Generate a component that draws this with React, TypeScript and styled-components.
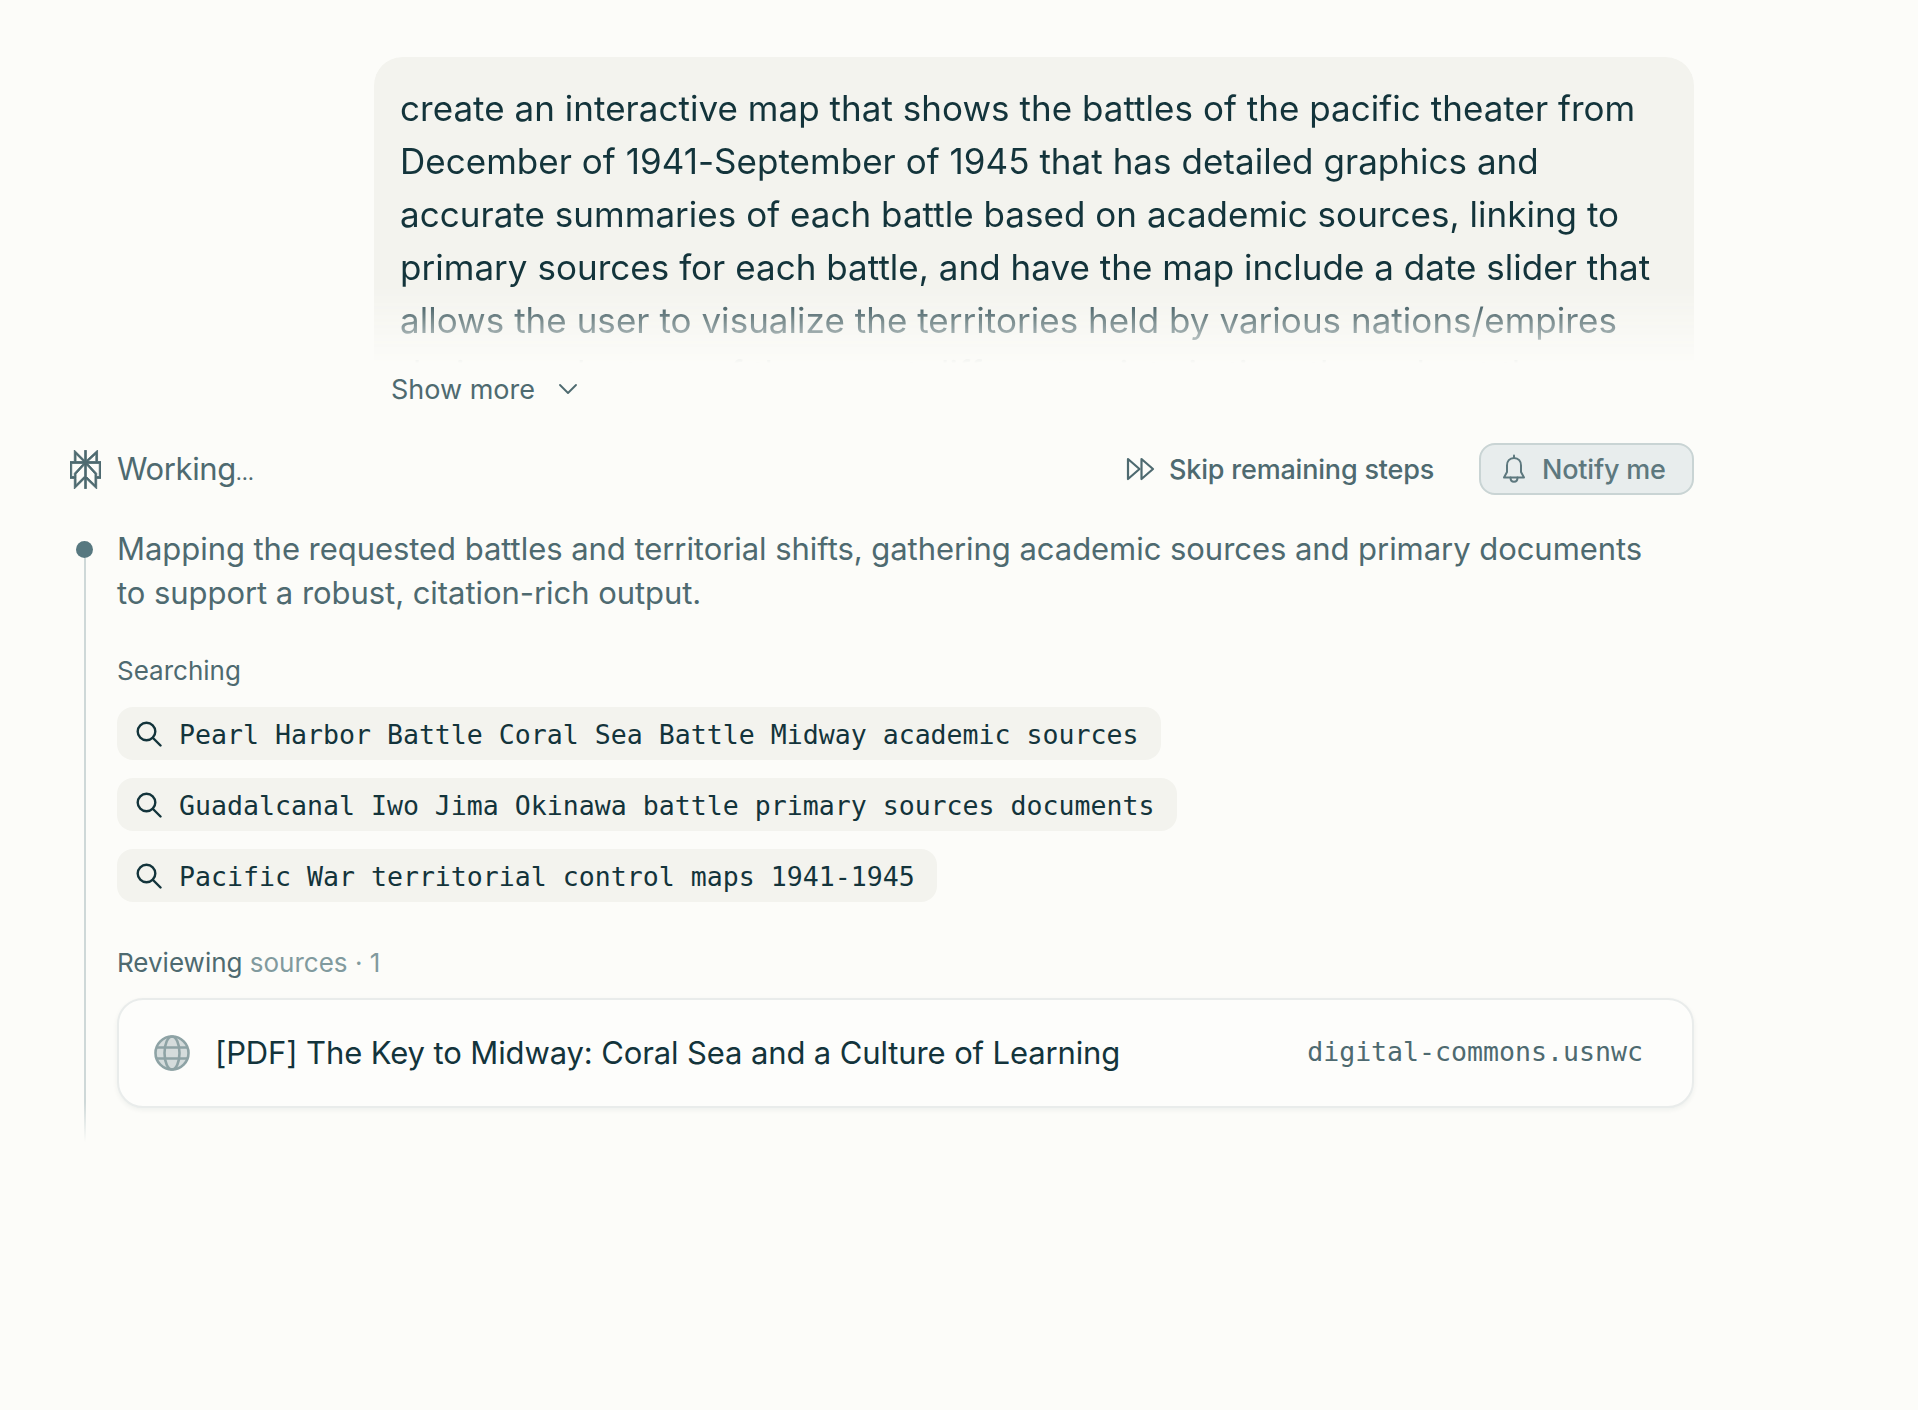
import React from "react";
import styled, { createGlobalStyle } from "styled-components";
import { ChevronDown } from "lucide-react";

const Global = createGlobalStyle`
  html, body { margin: 0; padding: 0; background: #fcfcf9; }
  body { font-family: Inter, "Liberation Sans", Arial, sans-serif; color: #13343b; }
`;

const Page = styled.div`
  box-sizing: border-box;
  width: 1918px;
  height: 1410px;
  padding: 57px 224px 0 70px;
  background: #fcfcf9;
`;

const Query = styled.div`
  margin-left: 304px;
`;

const Bubble = styled.div`
  box-sizing: border-box;
  height: 308px;
  padding: 25px 26px 0;
  overflow: hidden;
  border-radius: 28px 28px 0 0;
  background: #f3f3ee;
  font-size: 35px;
  line-height: 53px;
  letter-spacing: 0.03px;
  color: #13343b;
  -webkit-mask-image: linear-gradient(to bottom, #000 230px, transparent 306px);
  mask-image: linear-gradient(to bottom, #000 230px, transparent 306px);
`;

const ShowMore = styled.div`
  display: flex;
  align-items: center;
  gap: 17px;
  margin: 8px 0 0 17px;
  height: 32px;
  font-size: 27px;
  color: #4e6a70;
`;

const StatusRow = styled.div`
  display: flex;
  align-items: center;
  height: 52px;
  margin-top: 38px;
`;

const Working = styled.div`
  display: flex;
  align-items: center;
  gap: 16px;
  flex: 1;
  font-size: 31px;
  letter-spacing: -0.4px;
  color: #4e6a70;
`;

const WorkingLabel = styled.span`
  padding-bottom: 2px;
`;

const Dots = styled.span`
  font-size: 21px;
  letter-spacing: 0;
`;

const SkipButton = styled.div`
  display: flex;
  align-items: center;
  gap: 14px;
  margin-right: 45px;
  font-size: 27px;
  font-weight: 500;
  letter-spacing: -0.2px;
  color: #4e6a70;
`;

const NotifyButton = styled.div`
  box-sizing: border-box;
  display: flex;
  align-items: center;
  gap: 16px;
  width: 215px;
  height: 52px;
  padding-left: 21px;
  border: 2px solid #c9d4d4;
  border-radius: 16px;
  background: #e8eded;
  font-size: 27px;
  font-weight: 500;
  letter-spacing: -0.2px;
  color: #5d787e;
`;

const Step = styled.div`
  display: flex;
  gap: 18px;
  margin-top: 32px;
`;

const Rail = styled.div`
  display: flex;
  flex-direction: column;
  align-items: center;
  flex: 0 0 29px;
  padding-top: 14px;
`;

const Dot = styled.div`
  flex: none;
  width: 17px;
  height: 17px;
  border-radius: 50%;
  background: #577880;
`;

const RailLine = styled.div`
  flex: 1;
  width: 2px;
  background: linear-gradient(to bottom, #ced8d8 calc(100% - 40px), transparent);
`;

const StepBody = styled.div`
  flex: 1;
  min-width: 0;
  padding-bottom: 34px;
`;

const Summary = styled.div`
  font-size: 31px;
  line-height: 44px;
  letter-spacing: -0.05px;
  color: #4e6a70;
  padding-right: 40px;
`;

const SectionLabel = styled.div`
  font-size: 26px;
  line-height: 40px;
  color: #4e6a70;
  margin-top: ${(p: { $top: number }) => p.$top}px;
`;

const Muted = styled.span`
  color: #819a9e;
`;

const Chips = styled.div`
  display: flex;
  flex-direction: column;
  align-items: flex-start;
  gap: 18px;
  margin-top: 16px;
`;

const Chip = styled.div`
  box-sizing: border-box;
  display: flex;
  align-items: center;
  gap: 17px;
  height: 53px;
  padding: 0 22px 0 19px;
  border-radius: 16px;
  background: #f3f3ee;
  font-family: "DejaVu Sans Mono", monospace;
  font-size: 26.57px;
  color: #13343b;
`;

const ChipText = styled.span`
  padding-top: 2px;
`;

const SourceCard = styled.div`
  box-sizing: border-box;
  display: flex;
  align-items: center;
  height: 110px;
  margin-top: 15px;
  padding: 0 49px 0 35px;
  border: 2px solid #e9eceb;
  border-radius: 26px;
  background: #fdfdfb;
  box-shadow: 0 2px 5px rgba(19, 52, 59, 0.06);
`;

const SourceTitle = styled.div`
  flex: 1;
  margin-left: 25px;
  padding-bottom: 2px;
  font-size: 31px;
  letter-spacing: -0.12px;
  color: #13343b;
`;

const SourceDomain = styled.div`
  font-family: "DejaVu Sans Mono", monospace;
  font-size: 26.57px;
  color: #4e6a70;
  padding-bottom: 3px;
`;

const Logo = () => (
  <svg width="31" height="39" viewBox="1.6 0 20.8 24" preserveAspectRatio="none" fill="#4e6a70" stroke="#4e6a70" strokeWidth="0.55" strokeLinejoin="round">
    <path d="M22.3977 7.0896h-2.3106V.0676l-7.5094 6.3542V.1577h-1.1554v6.1966L4.4904 0v7.0896H1.6023v10.3976h2.8882V24l6.932-6.3591v6.2005h1.1554v-6.0469l6.9318 6.1807v-6.4879h2.8882V7.0896zm-3.4657-4.531v4.531h-5.355l5.355-4.531zm-13.2862.0676 4.8691 4.4634H5.6458V2.6262zM2.7576 16.332V8.245h7.8476l-6.1149 6.1147v1.9723H2.7576zm2.8882 5.0404v-3.8852h.0001v-2.6488l5.7763-5.7764v7.0111l-5.7764 5.2993zm12.7086.0248-5.7766-5.1509V9.0618l5.7766 5.7766v6.5588zm2.8882-5.0652h-1.733v-1.9723L13.3948 8.245h7.8478v8.087z" />
  </svg>
);

const SkipIcon = () => (
  <svg width="29" height="24" viewBox="0 0 29 24" fill="none" stroke="#4e6a70" strokeWidth="2.2" strokeLinejoin="round">
    <path d="M2 2L13.5 12L2 22Z" />
    <path d="M15.5 2L27 12L15.5 22Z" />
  </svg>
);

const BellIcon = () => (
  <svg width="24" height="30" viewBox="0 0 24 30" fill="none" stroke="#5d787e" strokeWidth="2" strokeLinejoin="round" strokeLinecap="round">
    <path d="M12 1.5V4" />
    <path d="M12 4C7.5 4 5 7.5 5 11.5V18L2 23.5H22L19 18V11.5C19 7.5 16.5 4 12 4Z" />
    <path d="M8.5 23.5C8.5 26 10 27.8 12 27.8C14 27.8 15.5 26 15.5 23.5" />
  </svg>
);

const Lens = () => (
  <svg width="26" height="26" viewBox="0 0 26 26" fill="none" stroke="#13343b" strokeWidth="2.4" strokeLinecap="round">
    <circle cx="10.5" cy="10.5" r="8.8" />
    <path d="M17 17L24.5 24.5" />
  </svg>
);

const Globe = () => (
  <svg width="36" height="36" viewBox="0 0 36 36" fill="#d5dcdc" stroke="#8ea3a5" strokeWidth="2.6">
    <circle cx="18" cy="18" r="16.5" />
    <ellipse cx="18" cy="18" rx="7.5" ry="16.5" fill="none" />
    <path d="M2 12.5H34M2 23.5H34" fill="none" />
  </svg>
);

const queries = [
  "Pearl Harbor Battle Coral Sea Battle Midway academic sources",
  "Guadalcanal Iwo Jima Okinawa battle primary sources documents",
  "Pacific War territorial control maps 1941-1945",
];

export default function App() {
  return (
    <Page>
      <Global />
      <Query>
        <Bubble>
          create an interactive map that shows the battles of the pacific theater from December of 1941-September of 1945 that has detailed graphics and accurate summaries of each battle based on academic sources, linking to primary sources for each battle, and have the map include a date slider that allows the user to visualize the territories held by various nations/empires during each stage of the war at different points in time throughout the conflict
        </Bubble>
        <ShowMore>
          Show more
          <ChevronDown size={32} strokeWidth={1.4} />
        </ShowMore>
      </Query>
      <StatusRow>
        <Working>
          <Logo />
          <WorkingLabel>
            Working<Dots>…</Dots>
          </WorkingLabel>
        </Working>
        <SkipButton>
          <SkipIcon />
          Skip remaining steps
        </SkipButton>
        <NotifyButton>
          <BellIcon />
          Notify me
        </NotifyButton>
      </StatusRow>
      <Step>
        <Rail>
          <Dot />
          <RailLine />
        </Rail>
        <StepBody>
          <Summary>
            Mapping the requested battles and territorial shifts, gathering academic sources and primary documents to support a robust, citation-rich output.
          </Summary>
          <SectionLabel $top={36}>Searching</SectionLabel>
          <Chips>
            {queries.map((q) => (
              <Chip key={q}>
                <Lens />
                <ChipText>{q}</ChipText>
              </Chip>
            ))}
          </Chips>
          <SectionLabel $top={41}>
            Reviewing <Muted>sources · 1</Muted>
          </SectionLabel>
          <SourceCard>
            <Globe />
            <SourceTitle>[PDF] The Key to Midway: Coral Sea and a Culture of Learning</SourceTitle>
            <SourceDomain>digital-commons.usnwc</SourceDomain>
          </SourceCard>
        </StepBody>
      </Step>
    </Page>
  );
}
